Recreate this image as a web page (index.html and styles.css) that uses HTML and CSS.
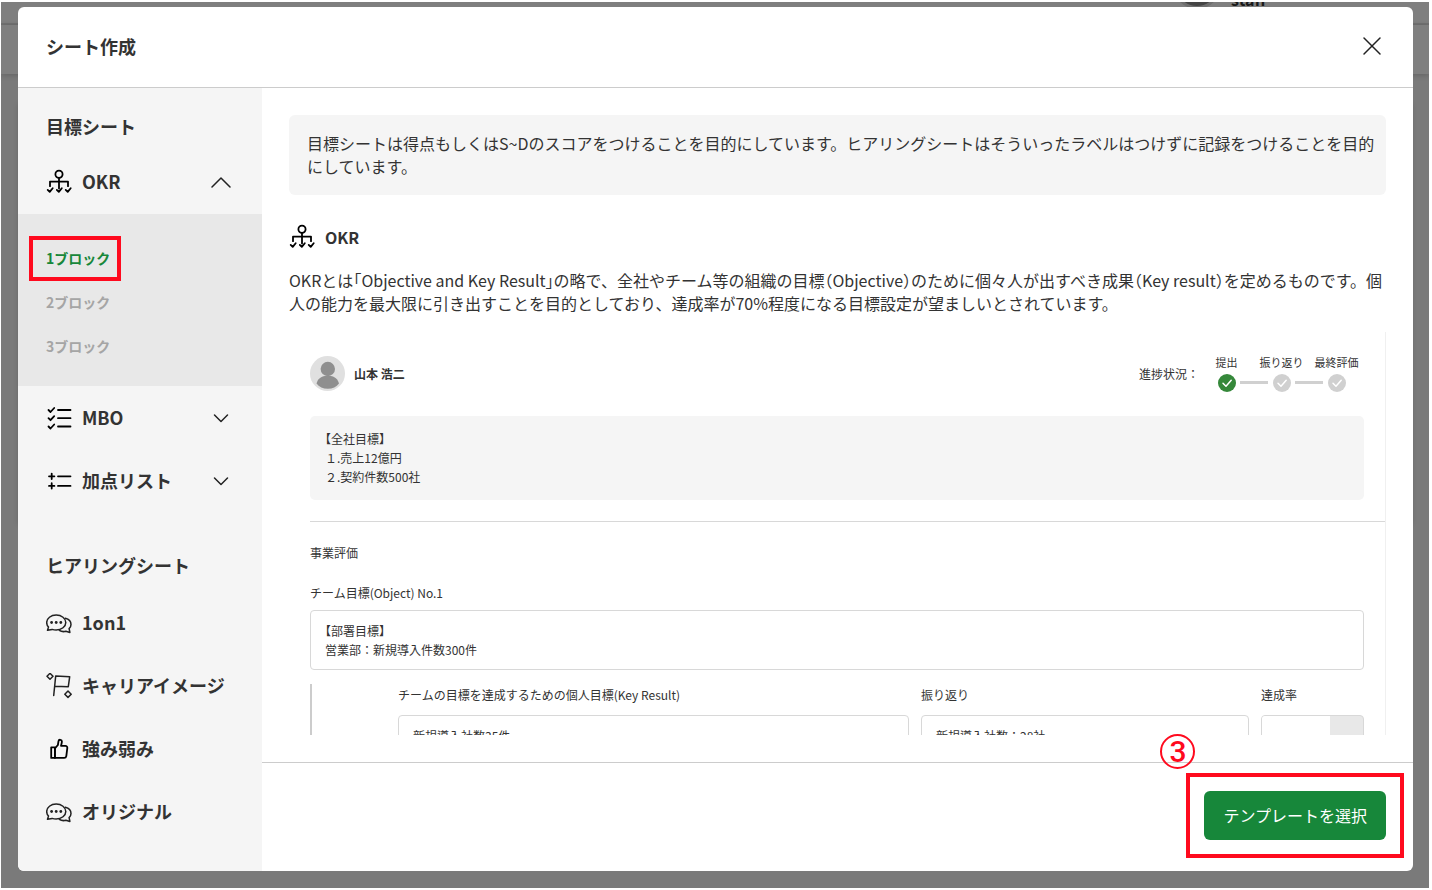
FILE: index.html
```html
<!DOCTYPE html>
<html lang="ja">
<head>
<meta charset="UTF-8" />
<meta name="viewport" content="width=device-width, initial-scale=1" />
<title>シート作成</title>
<link rel="stylesheet" href="styles.css">
</head>
<body>

  <!-- Shared icons -->
  <svg class="sprite" aria-hidden="true">
    <symbol id="icon-okr" viewBox="0 0 26 26">
      <circle cx="13" cy="5.3" r="3.6" />
      <path d="M13 9v10.500M4 17.200v-4.600h18v4.600" />
      <path d="M1.7 20.900l2 2 3-3.700M10.800 20.900l2 2 3-3.700M19.700 20.900l2 2 3-3.700" />
    </symbol>
    <symbol id="icon-mbo" viewBox="0 0 26 26">
      <path d="M12 5h12.500M12 13.200h12.500M12 21.500h12.500" />
      <path d="M2.500 5l2 2 3.700-4M2.500 13.200l2 2 3.700-4M2.500 21.500l2 2 3.700-4" />
    </symbol>
    <symbol id="icon-plus-list" viewBox="0 0 26 26">
      <path d="M3 8.300h5.400M5.700 5.600V11M3 17.900h5.400M5.700 15.200v5.400M12 8.300h12.500M12 17.900h12.500" />
    </symbol>
    <symbol id="icon-chat" viewBox="0 0 26 26">
      <path d="M1.500 20.300l1-3.200C1.300 15.800.7 14.200.7 12.500.7 8.400 4.900 5 10.200 5s9.600 3.500 9.600 7.500-4.200 7.500-9.600 7.500c-1.400 0-2.800-.2-4-.6z" />
      <path d="M19.300 8.300c3.400.9 5.700 3.300 5.700 6.200 0 1.600-.7 3-1.900 4.100l.8 3.900-4-1.200c-2.300.6-4.700.3-6.600-.9" />
      <circle class="dot" cx="5.600" cy="12.500" r="1.400" />
      <circle class="dot" cx="10.200" cy="12.500" r="1.400" />
      <circle class="dot" cx="14.800" cy="12.500" r="1.400" />
    </symbol>
    <symbol id="icon-flag" viewBox="0 0 26 26">
      <path d="M4 .3l3 3-3 3-3-3zM22 18l3.200 3.200-3.200 3.200-3.200-3.200z" />
      <path d="M7.700 22.500l2-19.600 14 .8-1.400 10-13.500-.4" />
    </symbol>
    <symbol id="icon-thumb" viewBox="0 0 26 26">
      <path d="M5.200 11.300h3.700v10.600H5.200z" />
      <path d="M8.900 12.400l3-3.400.6-3.900c.3-2 3.400-1.700 3.400.5 0 1.500-.6 3-.9 4.200h4.300c1.400 0 2.200 1 2 2.300l-1 8c-.2 1.200-1 1.800-2.100 1.800H8.900z" />
    </symbol>
    <symbol id="icon-check" viewBox="0 0 18 18">
      <path d="M5 9.300l3 3 5.200-6" />
    </symbol>
  </svg>

  <!-- Page behind the modal -->
  <div class="page" aria-hidden="true">
    <div class="page-top">
      <div class="page-user">
        <span class="page-avatar"></span>
        <span class="page-name">staff</span>
      </div>
    </div>
    <div class="page-nav"></div>
    <div class="page-card"></div>
  </div>

  <div class="overlay">
    <section class="modal" role="dialog" aria-labelledby="modalTitle">
      <header class="modal-header">
        <h1 id="modalTitle">シート作成</h1>
        <button type="button" class="close-btn" aria-label="閉じる">
          <svg viewBox="0 0 18 18"><path d="M1 1l16 16M17 1L1 17" /></svg>
        </button>
      </header>

      <div class="modal-body">
        <!-- Sidebar -->
        <nav class="sidebar">
          <h2>目標シート</h2>
          <button type="button" class="menu-item" aria-expanded="true">
            <svg class="icon bold"><use href="#icon-okr" /></svg>
            <span>OKR</span>
            <svg class="chevron" viewBox="0 0 20 12"><path d="M1 11l9-9 9 9" /></svg>
          </button>
          <ul class="submenu">
            <li><a href="#" class="active">1ブロック</a></li>
            <li><a href="#">2ブロック</a></li>
            <li><a href="#">3ブロック</a></li>
          </ul>
          <button type="button" class="menu-item" aria-expanded="false">
            <svg class="icon bold"><use href="#icon-mbo" /></svg>
            <span>MBO</span>
            <svg class="chevron" viewBox="0 0 20 12"><path d="M3.500 3l6.500 6.500L16.500 3" /></svg>
          </button>
          <button type="button" class="menu-item" aria-expanded="false">
            <svg class="icon bold"><use href="#icon-plus-list" /></svg>
            <span>加点リスト</span>
            <svg class="chevron" viewBox="0 0 20 12"><path d="M3.500 3l6.500 6.500L16.500 3" /></svg>
          </button>

          <h2 class="second">ヒアリングシート</h2>
          <button type="button" class="menu-item">
            <svg class="icon"><use href="#icon-chat" /></svg>
            <span>1on1</span>
          </button>
          <button type="button" class="menu-item">
            <svg class="icon"><use href="#icon-flag" /></svg>
            <span>キャリアイメージ</span>
          </button>
          <button type="button" class="menu-item">
            <svg class="icon bold"><use href="#icon-thumb" /></svg>
            <span>強み弱み</span>
          </button>
          <button type="button" class="menu-item">
            <svg class="icon"><use href="#icon-chat" /></svg>
            <span>オリジナル</span>
          </button>
        </nav>

        <!-- Main -->
        <div class="main">
          <div class="content">
            <p class="notice">目標シートは得点もしくはS~Dのスコアをつけることを目的にしています。ヒアリングシートはそういったラベルはつけずに記録をつけることを目的にしています。</p>

            <h2 class="sheet-title">
              <svg class="icon bold"><use href="#icon-okr" /></svg>
              OKR
            </h2>
            <p class="description">OKRとは<span class="half">「</span>Objective and Key Result<span class="half">」</span>の略で、全社やチーム等の組織の目標<span class="half">（</span>Objective<span class="half">）</span>のために個々人が出すべき成果<span class="half">（</span>Key result<span class="half">）</span>を定めるものです。個人の能力を最大限に引き出すことを目的としており、達成率が70%程度になる目標設定が望ましいとされています。</p>

            <!-- Template preview -->
            <div class="preview">
              <div class="preview-head">
                <svg class="avatar" viewBox="0 0 35 35">
                  <circle cx="17.500" cy="17.500" r="17.500" fill="#e0e0e0" />
                  <circle cx="17.800" cy="13" r="7.200" fill="#8f8f8f" />
                  <path d="M6.500 27.500c1.200-4.500 4.500-7 8.300-7.500h6c3.800.5 7 3 8.200 7.500-2.500 3.500-6.500 5.300-11.200 5.300S9 31 6.500 27.500z" fill="#8f8f8f" />
                </svg>
                <strong>山本 浩二</strong>
                <span class="status-label">進捗状況：</span>
                <ol class="steps">
                  <li class="done"><span>提出</span><svg><use href="#icon-check" /></svg></li>
                  <li><span>振り返り</span><svg><use href="#icon-check" /></svg></li>
                  <li><span>最終評価</span><svg><use href="#icon-check" /></svg></li>
                </ol>
              </div>

              <p class="company-goal"><span class="half">【</span>全社目標】<br>１.売上12億円<br>２.契約件数500社</p>

              <hr>

              <h3>事業評価</h3>
              <label for="teamGoal">チーム目標(Object) No.1</label>
              <textarea id="teamGoal" class="team-goal" rows="2" readonly>【部署目標】
営業部：新規導入件数300件</textarea>

              <div class="key-results">
                <div>
                  <label for="keyResult">チームの目標を達成するための個人目標(Key Result)</label>
                  <textarea id="keyResult" rows="2" readonly>新規導入社数35件</textarea>
                </div>
                <div>
                  <label for="review">振り返り</label>
                  <textarea id="review" rows="2" readonly>新規導入社数：28社</textarea>
                </div>
                <div>
                  <label for="rate">達成率</label>
                  <div class="rate"><input id="rate" type="text" readonly></div>
                </div>
              </div>
            </div>
          </div>

          <footer class="modal-footer">
            <div class="submit">
              <button type="button" class="submit-btn">テンプレートを選択</button>
              <span class="step-mark">3</span>
            </div>
          </footer>
        </div>
      </div>
    </section>
  </div>

</body>
</html>
```
FILE: styles.css
```css
* {
  box-sizing: border-box;
}

html, body {
  height: 100%;
  margin: 0;
}

body {
  position: relative;
  overflow: hidden;
  background: #fff;
  color: #333;
  font-family: "Noto Sans CJK JP", "Noto Sans", sans-serif;
  font-size: 16px;
  line-height: 23px;
}

h1, h2, h3, p, ul, ol {
  margin: 0;
  padding: 0;
}

ul, ol {
  list-style: none;
}

button, input, textarea {
  font: inherit;
  color: inherit;
}

button {
  border: none;
  background: none;
  cursor: pointer;
}

svg {
  fill: none;
  stroke: #222;
  stroke-linecap: round;
  stroke-linejoin: round;
}

.sprite {
  position: absolute;
  width: 0;
  height: 0;
}

/* Page behind the modal */
.page,
.overlay {
  position: absolute;
  inset: 2px 3px 2px 1px;
  overflow: hidden;
}

.page {
  background: #f4f4f4;
}

.page-top {
  display: flex;
  justify-content: flex-end;
  height: 23px;
  padding-right: 163px;
  background: #fff;
  border-bottom: 2px solid #e4e4e4;
}

.page-user {
  display: flex;
  align-items: center;
  gap: 10px;
  height: 48px;
  margin-top: -41px;
  font-weight: bold;
}

.page-avatar {
  width: 48px;
  height: 48px;
  border: 3px solid #ddd;
  border-radius: 50%;
  background: #888;
}

.page-name {
  padding-top: 28px;
}

.page-nav {
  height: 49px;
  background: #fff;
  box-shadow: 0 1px 6px rgba(0, 0, 0, 0.2);
}

.page-card {
  height: 420px;
  margin: 30px 18px;
  background: #fff;
  box-shadow: 0 0 6px rgba(0, 0, 0, 0.2);
}

/* Modal */
.overlay {
  padding: 5px 16px 17px 17px;
  background: rgba(0, 0, 0, 0.5);
}

.modal {
  display: flex;
  flex-direction: column;
  height: 100%;
  overflow: hidden;
  background: #fff;
  border-radius: 6px;
}

.modal-header {
  display: flex;
  align-items: center;
  justify-content: space-between;
  flex: none;
  height: 81px;
  padding: 0 28px 2px;
  border-bottom: 1px solid #ccc;
}

.modal-header h1 {
  font-size: 18px;
  line-height: 24px;
}

.close-btn {
  width: 26px;
  height: 26px;
  padding: 4px;
}

.close-btn svg {
  display: block;
  width: 18px;
  height: 18px;
  overflow: visible;
  stroke-width: 1.5;
}

.modal-body {
  display: grid;
  grid-template-columns: 244px minmax(0, 1fr);
  flex: 1;
  min-height: 0;
}

/* Sidebar */
.sidebar {
  padding-top: 26px;
  overflow: hidden;
  background: #f5f5f5;
}

.sidebar h2 {
  padding: 0 28px;
  margin-bottom: 12px;
  font-size: 18px;
  line-height: 24px;
}

.sidebar h2.second {
  margin-top: 41px;
  margin-bottom: 14px;
}

.menu-item {
  display: flex;
  align-items: center;
  gap: 10px;
  width: 100%;
  height: 63px;
  padding: 0 31px 0 28px;
  font-size: 18px;
  font-weight: bold;
  text-align: left;
}

.icon {
  flex: none;
  width: 26px;
  height: 26px;
  overflow: visible;
  stroke-width: 1.5;
}

.icon.bold {
  stroke: #000;
  stroke-width: 1.8;
}

.dot {
  fill: #222;
  stroke: none;
}

.chevron {
  width: 20px;
  height: 12px;
  margin-left: auto;
  stroke-width: 1.5;
}

.submenu {
  margin-top: 1px;
  padding: 22px 28px 18px;
  background: #e8e8e8;
}

.submenu li {
  display: flex;
  align-items: center;
  height: 44px;
}

.submenu a {
  position: relative;
  color: #a5a5a5;
  font-size: 14px;
  font-weight: bold;
  text-decoration: none;
}

.submenu a.active {
  color: #17873a;
}

.submenu a.active::after {
  content: "";
  position: absolute;
  inset: -11px;
  left: -17px;
  border: 4px solid #ff0a1e;
}

/* Main */
.main {
  display: flex;
  flex-direction: column;
  min-height: 0;
}

.content {
  display: flex;
  flex-direction: column;
  flex: 1;
  min-height: 0;
  padding: 27px;
}

.notice {
  flex: none;
  padding: 17px 8px 17px 18px;
  background: #f5f5f5;
  border-radius: 6px;
}

.sheet-title {
  display: flex;
  align-items: center;
  gap: 10px;
  margin: 29px 0 19px;
  font-size: 16px;
  line-height: 26px;
}

.description {
  margin-right: -8px;
}

.half {
  font-feature-settings: "halt";
}

/* Template preview */
.preview {
  flex: 1;
  min-height: 0;
  margin-top: 17px;
  padding: 23px 21px 0;
  overflow: hidden;
  border-right: 1px solid #f0f0f0;
  font-size: 12px;
  line-height: 19px;
}

.preview-head {
  display: flex;
  align-items: center;
}

.avatar {
  width: 35px;
  height: 35px;
  margin-right: 9px;
  stroke: none;
}

.status-label {
  margin-left: auto;
}

.steps {
  display: flex;
}

.steps li {
  position: relative;
  display: flex;
  flex-direction: column;
  align-items: center;
  gap: 5px;
  width: 55px;
  font-size: 11px;
  line-height: 14px;
  white-space: nowrap;
}

.steps li + li::before {
  content: "";
  position: absolute;
  left: -14px;
  bottom: 8px;
  width: 28px;
  height: 3px;
  background: #d0d0d0;
}

.steps svg {
  width: 18px;
  height: 18px;
  border-radius: 50%;
  background: #d0d0d0;
  stroke: #fff;
  stroke-width: 1.5;
}

.steps .done svg {
  background: #35883a;
}

.company-goal {
  margin-top: 24px;
  padding: 13px 15px 14px;
  background: #f5f5f5;
  border-radius: 5px;
}

.preview hr {
  height: 1px;
  margin: 21px -21px 21px 0;
  border: none;
  background: #d8d8d8;
}

.preview h3 {
  margin-bottom: 21px;
  font-size: 12px;
  font-weight: normal;
}

.preview label {
  display: block;
  margin-bottom: 8px;
}

.preview textarea {
  display: block;
  width: 100%;
  height: 60px;
  padding: 10px 14px;
  overflow: hidden;
  background: #fff;
  border: 1px solid #d8d8d8;
  border-radius: 4px;
  outline: none;
  resize: none;
  text-spacing-trim: trim-start;
}

.key-results {
  display: grid;
  grid-template-columns: 511fr 328fr 103fr;
  gap: 12px;
  margin-top: 14px;
  padding-left: 86px;
  border-left: 2px solid #ccc;
}

.key-results label {
  margin: 1px 0 11px;
}

.rate {
  display: flex;
  height: 60px;
  overflow: hidden;
  background: #e8e8e8;
  border: 1px solid #d8d8d8;
  border-radius: 4px;
}

.rate input {
  width: 67%;
  background: #fff;
  border: none;
  outline: none;
}

/* Footer */
.modal-footer {
  display: flex;
  align-items: center;
  justify-content: flex-end;
  flex: none;
  height: 109px;
  padding: 0 27px 4px;
  border-top: 1px solid #ccc;
}

.submit {
  position: relative;
}

.submit::after {
  content: "";
  position: absolute;
  inset: -18px;
  border: 4px solid #ff0a1e;
  pointer-events: none;
}

.submit-btn {
  display: block;
  height: 49px;
  padding: 0 19px;
  background: #17873a;
  border-radius: 6px;
  color: #fff;
}

.step-mark {
  position: absolute;
  top: -57px;
  left: -44px;
  width: 35px;
  height: 35px;
  border: 2px solid #ff0a1e;
  border-radius: 50%;
  color: #ff0a1e;
  font-family: Roboto, sans-serif;
  font-size: 30px;
  font-weight: 500;
  line-height: 32px;
  text-align: center;
}
```
